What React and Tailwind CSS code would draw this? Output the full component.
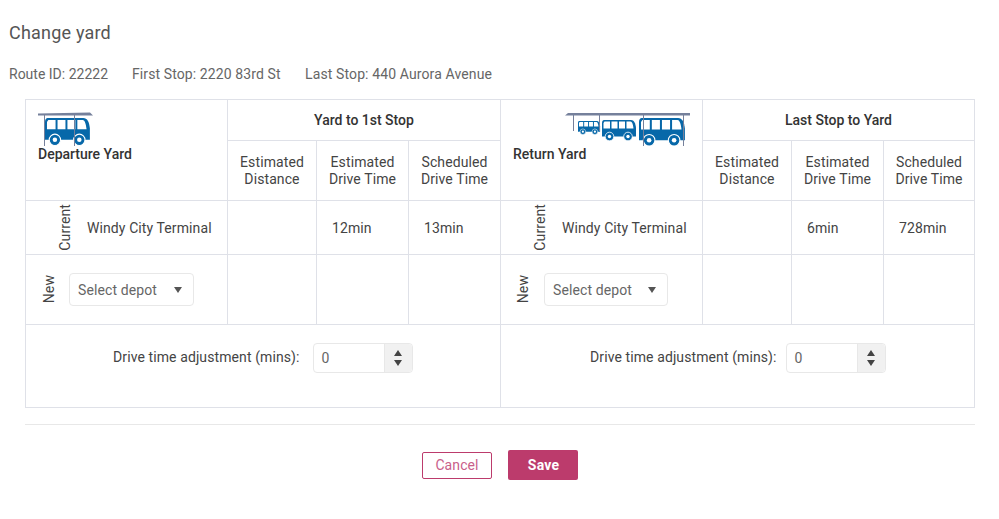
const headCell = "border border-[#dfe1e8] text-center align-middle font-normal p-0";
const cell = "border border-[#dfe1e8] p-0 align-middle";
const titleCell = "border border-[#dfe1e8] text-center align-middle p-0 font-medium text-[14px] tracking-normal text-[#333]";

// Bus body, drawn in a 34x21 box
function Bus({ x, y, scale = 1 }) {
  return (
    <g transform={`translate(${x} ${y}) scale(${scale})`}>
      <path d="M2 0H29C32 0 33.500 3 34 8V16.500H0V3C0 1 1 0 2 0Z" fill="#0768a9" />
      <path d="M2.500 1.500H8V8.500H1.500V3ZM9.500 1.500H15.500V8.500H9.500ZM17 1.500H23V8.500H17ZM24.500 1.500H28.500C30 1.500 31 4 31.500 8.500H24.500Z" fill="#fff" />
      <circle cx="7.500" cy="16.500" r="4.300" fill="#0768a9" stroke="#fff" strokeWidth="0.8" />
      <circle cx="7.500" cy="16.500" r="1.700" fill="#fff" />
      <circle cx="26" cy="16.500" r="4.300" fill="#0768a9" stroke="#fff" strokeWidth="0.8" />
      <circle cx="26" cy="16.500" r="1.700" fill="#fff" />
    </g>
  );
}

function DepartureIcon() {
  return (
    <svg width="56" height="36" viewBox="0 0 56 36" className="block">
      <path d="M0 1.500L52 0.500L55 3.500H0Z" fill="#75809b" />
      <Bus x={7} y={6} scale={1.32} />
      <path d="M6.500 3V34M36.500 3V34" stroke="#75809b" strokeWidth="1" fill="none" />
    </svg>
  );
}

function ReturnIcon() {
  return (
    <svg width="126" height="36" viewBox="0 0 126 36" className="block">
      <path d="M3 1H125V3.500H0Z" fill="#75809b" />
      <Bus x={13} y={9} scale={0.65} />
      <Bus x={37} y={8} scale={1} />
      <Bus x={74} y={6} scale={1.35} />
      <path d="M8.500 3V19M34.500 3V19M78.500 3V34M118.500 3V34" stroke="#75809b" strokeWidth="1" fill="none" />
    </svg>
  );
}

function DepotSelect({ width }) {
  return (
    <div className={`flex items-center justify-between h-[33px] ${width} border border-[#e8e8e8] rounded-[4px] pl-2 pr-[11px] text-[14px] text-[#666]`}>
      <span className="pt-[1px]">Select depot</span>
      <span className="w-0 h-0 border-x-[4px] border-x-transparent border-t-[6px] border-t-[#555]" />
    </div>
  );
}

function Spinner() {
  return (
    <div className="flex h-[30px] w-[100px] border border-[#e8e8e8] rounded-[4px] text-[14px] text-[#666]">
      <span className="flex-1 pl-2 leading-[28px]">0</span>
      <div className="flex flex-col w-[28px] bg-[#f1f1f1] border-l border-[#e8e8e8] rounded-r-[4px] items-center justify-center gap-[4px]">
        <span className="w-0 h-0 border-x-[4.5px] border-x-transparent border-b-[6px] border-b-[#444]" />
        <span className="w-0 h-0 border-x-[4.5px] border-x-transparent border-t-[6px] border-t-[#444]" />
      </div>
    </div>
  );
}

function SideLabel({ children }) {
  return (
    <span className="[writing-mode:vertical-rl] rotate-180 text-[14px] leading-[14px] text-[#444]">{children}</span>
  );
}

export default function App() {
  return (
    <div className="w-[999px] h-[519px] bg-white font-['Roboto',sans-serif] text-[#444] tracking-[0.1px] overflow-hidden">
      <h1 className="pl-[9px] pt-[22px] text-[18px] leading-[22px] tracking-[0.2px] text-[#555]">Change yard</h1>

      <div className="flex pl-[9px] pt-[20px] text-[14px] leading-[20px] text-[#666]">
        <span className="w-[123px] tracking-normal">Route ID: 22222</span>
        <span className="w-[173px]">First Stop: 2220 83rd St</span>
        <span className="tracking-[0.12px]">Last Stop: 440 Aurora Avenue</span>
      </div>

      <div className="px-[25px] pt-[15px]">
        <table className="w-[949px] table-fixed border-collapse text-[14px]">
          <colgroup>
            <col className="w-[202px]" />
            <col className="w-[89px]" />
            <col className="w-[92px]" />
            <col className="w-[92px]" />
            <col className="w-[202px]" />
            <col className="w-[89px]" />
            <col className="w-[92px]" />
            <col className="w-[91px]" />
          </colgroup>
          <tbody>
            <tr className="h-[41px]">
              <td rowSpan={2} className={`${cell} align-top pl-3 pt-3`}>
                <DepartureIcon />
                <div className="font-medium text-[14px] leading-[16px] tracking-normal text-[#333] -mt-[2px]">Departure Yard</div>
              </td>
              <td colSpan={3} className={titleCell}>Yard to 1st Stop</td>
              <td rowSpan={2} className={`${cell} align-top pl-3 pt-3`}>
                <div className="pl-[52px]"><ReturnIcon /></div>
                <div className="font-medium text-[14px] leading-[16px] tracking-normal text-[#333] -mt-[2px]">Return Yard</div>
              </td>
              <td colSpan={3} className={titleCell}>Last Stop to Yard</td>
            </tr>
            <tr className="h-[60px] leading-[17px]">
              <td className={headCell}>Estimated<br />Distance</td>
              <td className={headCell}>Estimated<br />Drive Time</td>
              <td className={headCell}>Scheduled<br />Drive Time</td>
              <td className={headCell}>Estimated<br />Distance</td>
              <td className={headCell}>Estimated<br />Drive Time</td>
              <td className={headCell}>Scheduled<br />Drive Time</td>
            </tr>
            <tr className="h-[54px]">
              <td className={cell}>
                <div className="flex items-center pl-[32px] gap-[15px]">
                  <SideLabel>Current</SideLabel>
                  <span className="pt-[1px]">Windy City Terminal</span>
                </div>
              </td>
              <td className={cell} />
              <td className={`${cell} pl-[15px] pt-[1px]`}>12min</td>
              <td className={`${cell} pl-[15px] pt-[1px]`}>13min</td>
              <td className={cell}>
                <div className="flex items-center pl-[32px] gap-[15px]">
                  <SideLabel>Current</SideLabel>
                  <span className="pt-[1px]">Windy City Terminal</span>
                </div>
              </td>
              <td className={cell} />
              <td className={`${cell} pl-[15px] pt-[1px]`}>6min</td>
              <td className={`${cell} pl-[15px] pt-[1px]`}>728min</td>
            </tr>
            <tr className="h-[70px]">
              <td className={cell}>
                <div className="flex items-center pl-[16px] gap-[13px]">
                  <SideLabel>New</SideLabel>
                  <DepotSelect width="w-[125px]" />
                </div>
              </td>
              <td className={cell} />
              <td className={cell} />
              <td className={cell} />
              <td className={cell}>
                <div className="flex items-center pl-[15px] gap-[14px]">
                  <SideLabel>New</SideLabel>
                  <DepotSelect width="w-[124px]" />
                </div>
              </td>
              <td className={cell} />
              <td className={cell} />
              <td className={cell} />
            </tr>
            <tr className="h-[83px]">
              <td colSpan={4} className={`${cell} align-top pt-[18px]`}>
                <div className="flex items-center pl-[87px] gap-[13px]">
                  <span className="mb-[2px]">Drive time adjustment (mins):</span>
                  <Spinner />
                </div>
              </td>
              <td colSpan={4} className={`${cell} align-top pt-[18px]`}>
                <div className="flex items-center pl-[89px] gap-[9px]">
                  <span className="mb-[2px]">Drive time adjustment (mins):</span>
                  <Spinner />
                </div>
              </td>
            </tr>
          </tbody>
        </table>

        <div className="mt-[16px] w-[950px] border-t border-[#e8e8e8] flex justify-center items-center gap-4 pt-[25px]">
          <button className="w-[70px] h-[27px] border border-[#bc3b6c] rounded-[2px] pt-[1px] text-[14px] text-[#c9608a] bg-white">Cancel</button>
          <button className="w-[70px] h-[30px] rounded-[2px] bg-[#bc3b6c] pl-[1px] text-[14px] font-bold tracking-[0.2px] text-white">Save</button>
        </div>
      </div>
    </div>
  );
}
